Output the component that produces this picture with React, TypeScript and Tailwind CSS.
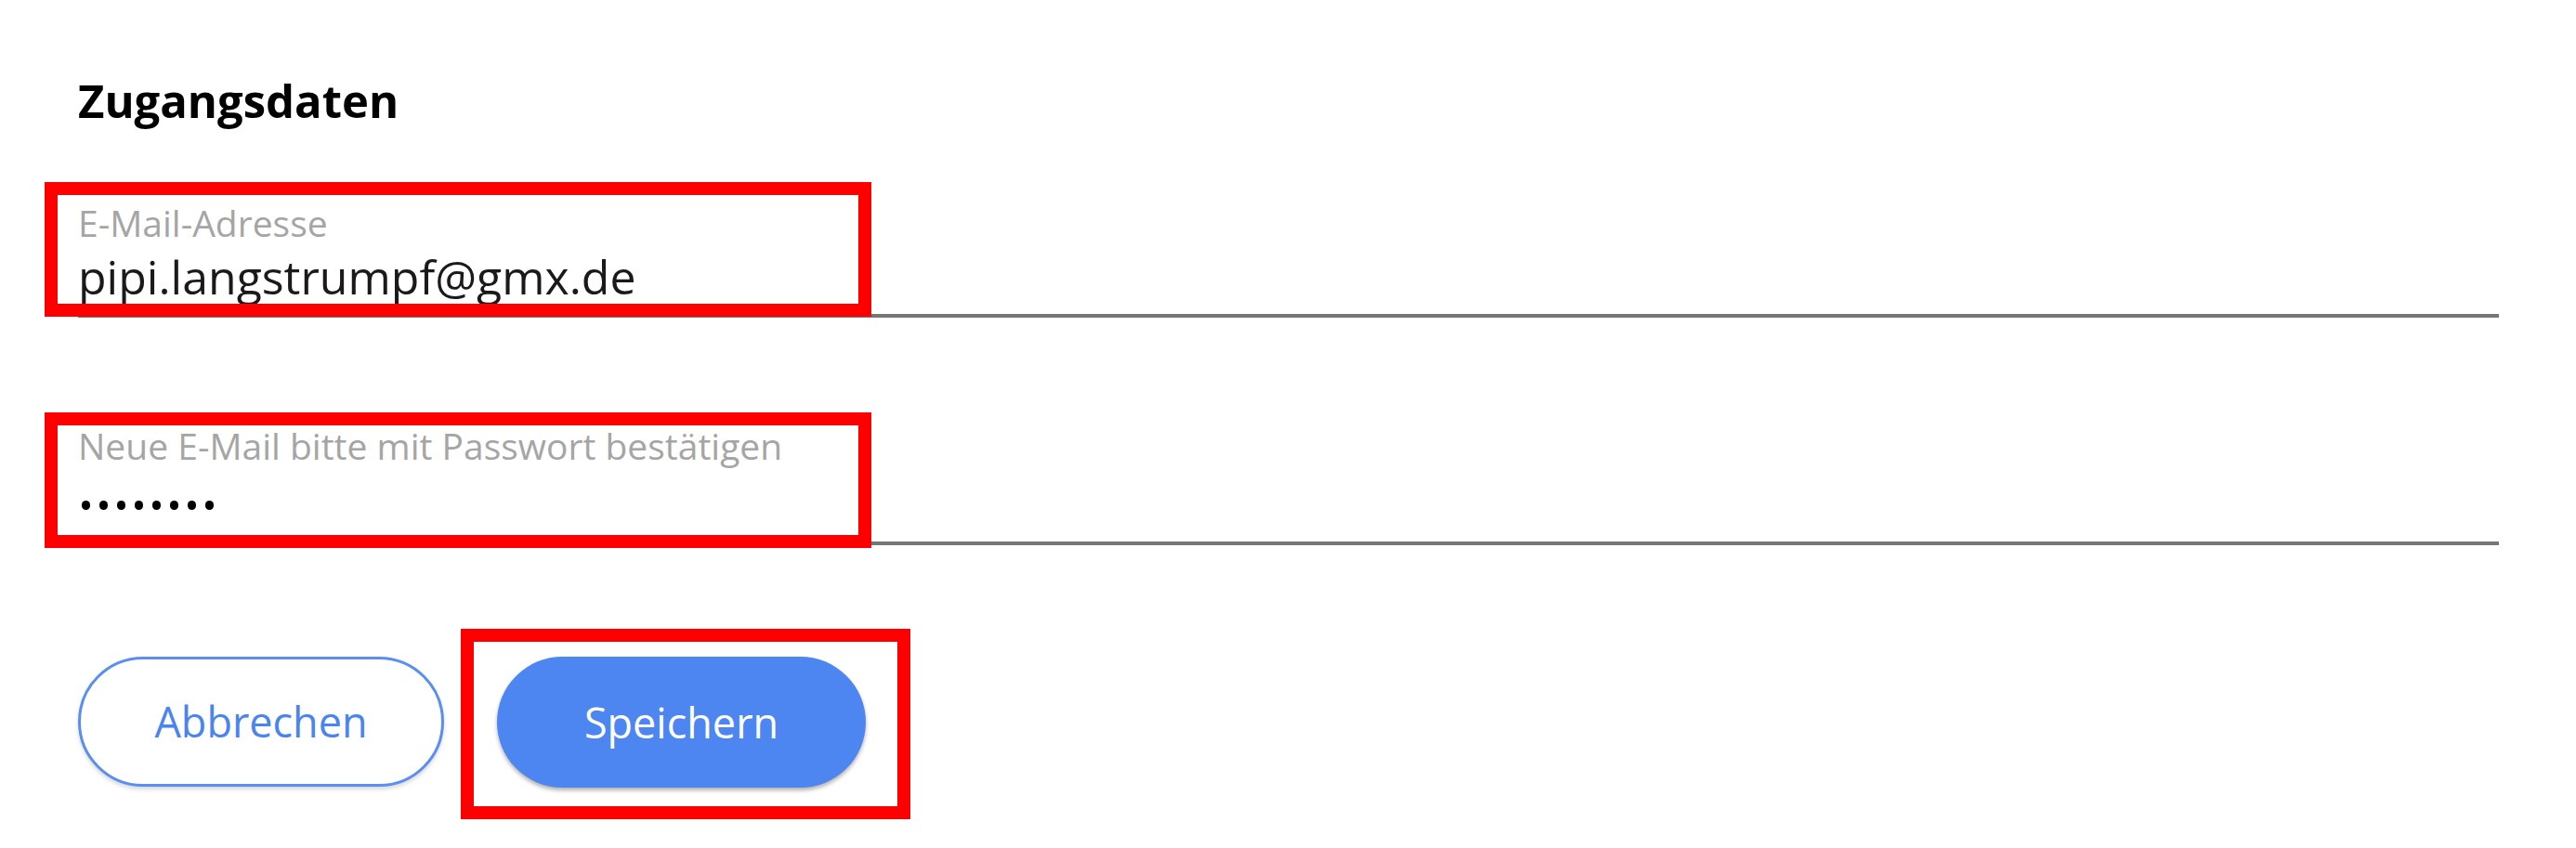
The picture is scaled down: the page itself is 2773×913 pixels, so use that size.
import React from 'react'

const dots = [0, 1, 2, 3, 4, 5, 6, 7]

export default function App() {
  return (
    <div className="w-full h-[913px] bg-white pl-[84px] pr-[83px] pt-[84px] font-['Open_Sans','Noto_Sans',sans-serif]">
      <h2 className="text-[49px] leading-[49px] font-bold text-black">Zugangsdaten</h2>

      {/* E-Mail */}
      <div className="relative mt-[87px] border-b-4 border-[#767676] pb-[15px]">
        <div className="text-[39px] leading-[39px] text-[#a5a5a5]">E-Mail-Adresse</div>
        <div className="mt-[14px] text-[50px] leading-[50px] text-[#1a1a1a]">pipi.langstrumpf@gmx.de</div>
        <div className="absolute left-[-36px] top-[-24px] w-[890px] h-[145px] border-[14px] border-[#ff0000]" />
      </div>

      {/* Passwort */}
      <div className="relative mt-[118px] border-b-4 border-[#767676] pb-[21px]">
        <div className="text-[39px] leading-[39px] text-[#a5a5a5]">Neue E-Mail bitte mit Passwort bestätigen</div>
        <div className="mt-[13px] h-[50px] flex items-end gap-[10px] pl-[4px] pb-[13px]">
          {dots.map((d) => (
            <span key={d} className="w-[9px] h-[10px] rounded-full bg-black" />
          ))}
        </div>
        <div className="absolute left-[-36px] top-[-16px] w-[890px] h-[146px] border-[14px] border-[#ff0000]" />
      </div>

      {/* Buttons */}
      <div className="mt-[120px] flex items-start gap-[57px]">
        <button className="w-[394px] h-[140px] rounded-full border-[3px] border-[#5a8ef0] bg-white text-[45px] text-[#4a84ef] shadow-[0_3px_4px_rgba(0,0,0,0.15)]">
          Abbrechen
        </button>
        <div className="relative">
          <button className="w-[397px] h-[141px] rounded-full bg-[#4d86f1] text-[45px] text-white shadow-[0_3px_4px_rgba(0,0,0,0.3)]">
            Speichern
          </button>
          <div className="absolute left-[-39px] top-[-30px] w-[484px] h-[205px] border-[14px] border-[#ff0000]" />
        </div>
      </div>
    </div>
  )
}
